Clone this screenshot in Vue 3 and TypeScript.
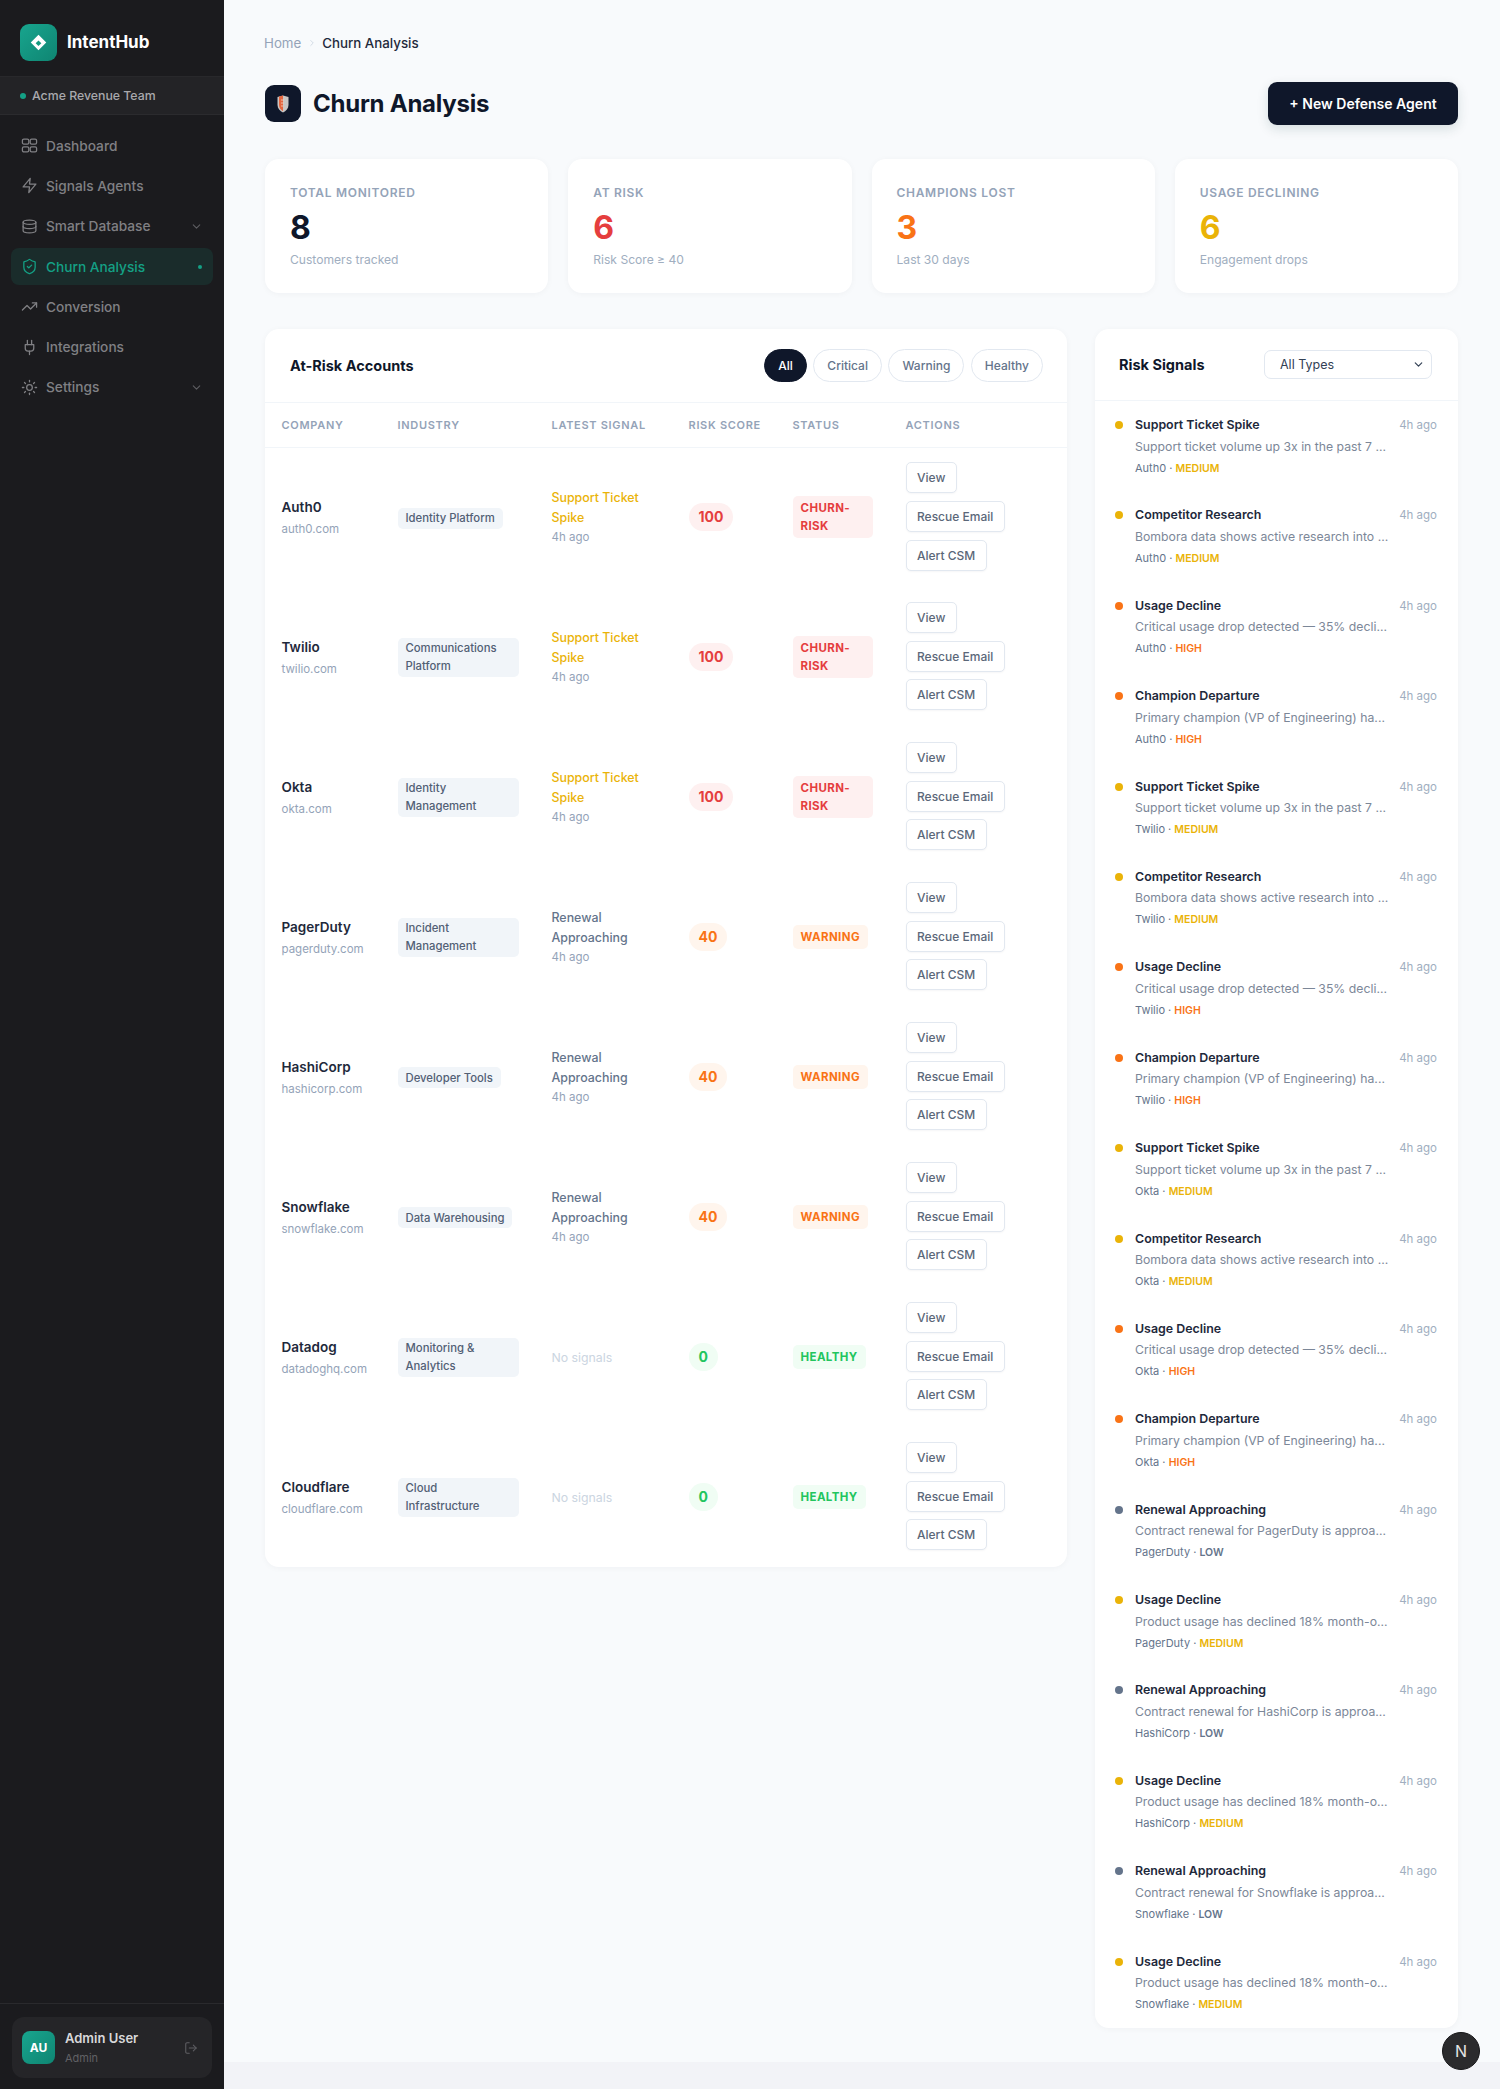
<template>
  <div class="app">
    <aside class="sidebar">
      <div class="brand">
        <div class="logo"><span class="logo-mark"></span></div>
        <span class="brand-name">IntentHub</span>
      </div>
      <div class="team"><span class="team-dot"></span>Acme Revenue Team</div>
      <nav class="nav">
        <a v-for="item in navItems" :key="item.label" class="nav-item" :class="{ active: item.active }">
          <svg class="nav-icon" viewBox="0 0 24 24" fill="none" stroke="currentColor" stroke-width="1.8" stroke-linecap="round" stroke-linejoin="round">
            <path v-for="(d, i) in item.paths" :key="i" :d="d" />
          </svg>
          <span class="nav-label">{{ item.label }}</span>
          <svg v-if="item.caret" class="caret" viewBox="0 0 24 24" fill="none" stroke="currentColor" stroke-width="2" stroke-linecap="round" stroke-linejoin="round"><path d="m6 9 6 6 6-6" /></svg>
          <span v-if="item.active" class="nav-dot"></span>
        </a>
      </nav>
      <div class="user-wrap">
        <div class="user">
          <div class="avatar">AU</div>
          <div class="user-info">
            <div class="user-name">Admin User</div>
            <div class="user-role">Admin</div>
          </div>
          <svg class="logout" viewBox="0 0 24 24" fill="none" stroke="currentColor" stroke-width="1.8" stroke-linecap="round" stroke-linejoin="round">
            <path d="M9 21H5a2 2 0 0 1-2-2V5a2 2 0 0 1 2-2h4" /><path d="m16 17 5-5-5-5" /><path d="M21 12H9" />
          </svg>
        </div>
      </div>
    </aside>

    <main class="main">
      <div class="crumbs">
        <span class="crumb-home">Home</span>
        <svg class="crumb-sep" viewBox="0 0 24 24" fill="none" stroke="currentColor" stroke-width="2" stroke-linecap="round" stroke-linejoin="round"><path d="m9 18 6-6-6-6" /></svg>
        <span class="crumb-current">Churn Analysis</span>
      </div>

      <header class="page-head">
        <div class="page-title">
          <div class="title-icon">
            <svg viewBox="0 0 12 18" width="12" height="18">
              <path d="M6 .5 11.500 2v8c0 3.500-2.500 6-5.500 7.500C3 16 .5 13.500.5 10V2z" fill="#c9c6c4" />
              <path d="M6 .5 2 1.600v8.400c0 2.800 1.800 4.900 4 6.300z" fill="#e4663f" />
              <path d="M4 5h3M4 8h3M4 11h2.500" stroke="#f3d3c3" stroke-width=".8" />
            </svg>
          </div>
          <h1>Churn Analysis</h1>
        </div>
        <button class="primary">+ New Defense Agent</button>
      </header>

      <section class="stats">
        <div v-for="s in stats" :key="s.label" class="stat">
          <div class="stat-label">{{ s.label }}</div>
          <div class="stat-value" :class="s.tone">{{ s.value }}</div>
          <div class="stat-sub">{{ s.sub }}</div>
        </div>
      </section>

      <section class="columns">
        <div class="card accounts">
          <div class="accounts-head">
            <h2>At-Risk Accounts</h2>
            <div class="filters">
              <button v-for="(f, i) in filters" :key="f" class="filter" :class="{ on: i === 0 }">{{ f }}</button>
            </div>
          </div>
          <table>
            <colgroup>
              <col class="c1" /><col class="c2" /><col class="c3" /><col class="c4" /><col class="c5" /><col class="c6" />
            </colgroup>
            <thead>
              <tr>
                <th>Company</th><th>Industry</th><th>Latest Signal</th><th>Risk Score</th><th>Status</th><th>Actions</th>
              </tr>
            </thead>
            <tbody>
              <tr v-for="a in accounts" :key="a.name">
                <td>
                  <div class="co-name">{{ a.name }}</div>
                  <div class="co-domain">{{ a.domain }}</div>
                </td>
                <td><span class="tag">{{ a.industry }}</span></td>
                <td>
                  <template v-if="a.signal">
                    <div class="sig" :class="a.level">{{ a.signal }}</div>
                    <div class="sig-time">4h ago</div>
                  </template>
                  <div v-else class="no-sig">No signals</div>
                </td>
                <td><span class="score" :class="a.level">{{ a.score }}</span></td>
                <td><span class="status" :class="a.level">{{ a.status }}</span></td>
                <td>
                  <div class="actions">
                    <button>View</button>
                    <button>Rescue Email</button>
                    <button>Alert CSM</button>
                  </div>
                </td>
              </tr>
            </tbody>
          </table>
        </div>

        <div class="card signals">
          <div class="signals-head">
            <h2>Risk Signals</h2>
            <div class="select">
              All Types
              <svg viewBox="0 0 24 24" fill="none" stroke="currentColor" stroke-width="2.2" stroke-linecap="round" stroke-linejoin="round"><path d="m6 9 6 6 6-6" /></svg>
            </div>
          </div>
          <div v-for="(s, i) in signals" :key="i" class="signal">
            <span class="dot" :class="s.sev"></span>
            <div class="signal-body">
              <div class="signal-top">
                <span class="signal-title">{{ s.title }}</span>
                <span class="signal-time">4h ago</span>
              </div>
              <div class="signal-desc">{{ s.desc }}</div>
              <div class="signal-meta">{{ s.company }} · <span class="sev" :class="s.sev">{{ s.sev.toUpperCase() }}</span></div>
            </div>
          </div>
        </div>
      </section>
    </main>

    <div class="dev-badge">N</div>
  </div>
</template>

<script setup lang="ts">
interface NavItem {
  label: string
  paths: string[]
  caret?: boolean
  active?: boolean
}

const navItems: NavItem[] = [
  { label: 'Dashboard', paths: ['M4 3h5a2 2 0 0 1 2 2v3a2 2 0 0 1-2 2H4a2 2 0 0 1-2-2V5a2 2 0 0 1 2-2z', 'M15 3h5a2 2 0 0 1 2 2v3a2 2 0 0 1-2 2h-5a2 2 0 0 1-2-2V5a2 2 0 0 1 2-2z', 'M4 14h5a2 2 0 0 1 2 2v3a2 2 0 0 1-2 2H4a2 2 0 0 1-2-2v-3a2 2 0 0 1 2-2z', 'M15 14h5a2 2 0 0 1 2 2v3a2 2 0 0 1-2 2h-5a2 2 0 0 1-2-2v-3a2 2 0 0 1 2-2z'] },
  { label: 'Signals Agents', paths: ['M13 2 3 14h9l-1 8 10-12h-9l1-8z'] },
  { label: 'Smart Database', caret: true, paths: ['M3 6c0-1.700 4-3 9-3s9 1.300 9 3-4 3-9 3-9-1.300-9-3z', 'M3 6v12c0 1.700 4 3 9 3s9-1.300 9-3V6', 'M3 12c0 1.700 4 3 9 3s9-1.300 9-3'] },
  { label: 'Churn Analysis', active: true, paths: ['M20 13c0 5-3.500 7.500-7.660 8.950a1 1 0 0 1-.67-.01C7.500 20.500 4 18 4 13V6a1 1 0 0 1 1-1c2 0 4.500-1.200 6.240-2.720a1.170 1.170 0 0 1 1.520 0C14.510 3.810 17 5 19 5a1 1 0 0 1 1 1z', 'm9 12 2 2 4-4'] },
  { label: 'Conversion', paths: ['M22 7l-8.500 8.500-5-5L2 17', 'M16 7h6v6'] },
  { label: 'Integrations', paths: ['M12 22v-5', 'M9 8V2', 'M15 8V2', 'M18 8v5a4 4 0 0 1-4 4h-4a4 4 0 0 1-4-4V8z'] },
  { label: 'Settings', caret: true, paths: ['M12 8a4 4 0 1 0 0 8 4 4 0 0 0 0-8z', 'M12 2v2', 'M12 20v2', 'M4.900 4.900l1.400 1.400', 'M17.700 17.700l1.400 1.400', 'M2 12h2', 'M20 12h2', 'M6.300 17.700l-1.400 1.400', 'M19.100 4.900l-1.400 1.400'] }
]

const stats = [
  { label: 'Total Monitored', value: 8, sub: 'Customers tracked', tone: 'ink' },
  { label: 'At Risk', value: 6, sub: 'Risk Score ≥ 40', tone: 'red' },
  { label: 'Champions Lost', value: 3, sub: 'Last 30 days', tone: 'orange' },
  { label: 'Usage Declining', value: 6, sub: 'Engagement drops', tone: 'amber' }
]

const filters = ['All', 'Critical', 'Warning', 'Healthy']

type Level = 'churn' | 'warn' | 'ok'

const row = (name: string, domain: string, industry: string, level: Level) => ({
  name,
  domain,
  industry,
  level,
  signal: level === 'churn' ? 'Support Ticket Spike' : level === 'warn' ? 'Renewal Approaching' : '',
  score: level === 'churn' ? 100 : level === 'warn' ? 40 : 0,
  status: level === 'churn' ? 'CHURN-RISK' : level === 'warn' ? 'WARNING' : 'HEALTHY'
})

const accounts = [
  row('Auth0', 'auth0.com', 'Identity Platform', 'churn'),
  row('Twilio', 'twilio.com', 'Communications Platform', 'churn'),
  row('Okta', 'okta.com', 'Identity Management', 'churn'),
  row('PagerDuty', 'pagerduty.com', 'Incident Management', 'warn'),
  row('HashiCorp', 'hashicorp.com', 'Developer Tools', 'warn'),
  row('Snowflake', 'snowflake.com', 'Data Warehousing', 'warn'),
  row('Datadog', 'datadoghq.com', 'Monitoring & Analytics', 'ok'),
  row('Cloudflare', 'cloudflare.com', 'Cloud Infrastructure', 'ok')
]

const critical = (company: string) => [
  { title: 'Support Ticket Spike', desc: 'Support ticket volume up 3x in the past 7 ...', company, sev: 'medium' },
  { title: 'Competitor Research', desc: 'Bombora data shows active research into ...', company, sev: 'medium' },
  { title: 'Usage Decline', desc: 'Critical usage drop detected — 35% decli...', company, sev: 'high' },
  { title: 'Champion Departure', desc: 'Primary champion (VP of Engineering) ha...', company, sev: 'high' }
]

const renewal = (company: string) => [
  { title: 'Renewal Approaching', desc: `Contract renewal for ${company} is approa...`, company, sev: 'low' },
  { title: 'Usage Decline', desc: 'Product usage has declined 18% month-o...', company, sev: 'medium' }
]

const signals = [
  ...critical('Auth0'),
  ...critical('Twilio'),
  ...critical('Okta'),
  ...renewal('PagerDuty'),
  ...renewal('HashiCorp'),
  ...renewal('Snowflake')
]
</script>

<style>
html, body { margin: 0; background: #f2f3f7; }
</style>

<style scoped>
.app {
  display: flex;
  align-items: flex-start;
  min-height: 100vh;
  font-family: Inter, "Liberation Sans", sans-serif;
  color: #0f172a;
}

/* sidebar */
.sidebar {
  width: 224px;
  flex: none;
  height: 100vh;
  background: #1b1b1e;
  display: flex;
  flex-direction: column;
}
.brand {
  height: 76px;
  box-sizing: border-box;
  padding: 24px 20px 0;
  display: flex;
  align-items: flex-start;
  gap: 10px;
}
.logo {
  width: 37px;
  height: 37px;
  border-radius: 9px;
  background: linear-gradient(135deg, #18a58e, #0f8572);
  display: flex;
  align-items: center;
  justify-content: center;
}
.logo-mark {
  width: 11px;
  height: 11px;
  background: #fff;
  transform: rotate(45deg);
  position: relative;
}
.logo-mark::after {
  content: "";
  position: absolute;
  inset: 3.500px;
  background: #14997f;
}
.brand-name {
  font-size: 17px;
  font-weight: 700;
  color: #fff;
  line-height: 37px;
}
.team {
  height: 39px;
  box-sizing: border-box;
  padding-left: 20px;
  display: flex;
  align-items: center;
  gap: 6px;
  background: #232326;
  border-top: 1px solid #28282b;
  border-bottom: 1px solid #2b2b2e;
  font-size: 12.300px;
  font-weight: 500;
  color: #a9a9ad;
}
.team-dot {
  width: 6px;
  height: 6px;
  border-radius: 50%;
  background: #14a085;
}
.nav {
  padding: 12px 11px 0;
  display: flex;
  flex-direction: column;
  gap: 3px;
}
.nav-item {
  height: 37.300px;
  border-radius: 8px;
  padding: 0 10px 0 10px;
  display: flex;
  align-items: center;
  gap: 8px;
  font-size: 13.700px;
  font-weight: 500;
  color: #808084;
}
.nav-item.active {
  background: rgba(20, 160, 133, 0.13);
  color: #14a085;
}
.nav-icon {
  width: 17px;
  height: 17px;
  flex: none;
}
.nav-label {
  flex: 1;
}
.caret {
  width: 13px;
  height: 13px;
  color: #5d5d61;
}
.nav-dot {
  width: 4px;
  height: 4px;
  border-radius: 50%;
  background: #14a085;
  margin-right: 1px;
}
.user-wrap {
  margin-top: auto;
  border-top: 1px solid #2a2a2d;
  height: 86px;
  box-sizing: border-box;
  padding: 13px 12px 0;
}
.user {
  height: 61px;
  box-sizing: border-box;
  border-radius: 12px;
  background: #252528;
  padding: 0 14px 0 10px;
  display: flex;
  align-items: center;
  gap: 10px;
}
.avatar {
  width: 33px;
  height: 33px;
  border-radius: 8px;
  background: linear-gradient(135deg, #18a58e, #0f8572);
  color: #fff;
  font-size: 12px;
  font-weight: 700;
  display: flex;
  align-items: center;
  justify-content: center;
}
.user-info {
  flex: 1;
}
.user-name {
  font-size: 13px;
  font-weight: 600;
  color: #d8d8da;
  line-height: 18px;
}
.user-role {
  font-size: 11px;
  color: #616165;
  line-height: 16px;
  margin-top: 3px;
}
.logout {
  width: 14px;
  height: 14px;
  color: #5f5f63;
}

/* main */
.main {
  flex: 1;
  min-width: 0;
  background: #f8fafc;
  padding: 33px 42px 34px 41px;
}
.crumbs {
  height: 20px;
  display: flex;
  align-items: center;
  font-size: 13.300px;
  margin-left: -1px;
}
.crumb-home {
  color: #94a3b8;
}
.crumb-sep {
  width: 10px;
  height: 10px;
  margin: 0 5.500px;
  color: #cbd5e1;
}
.crumb-current {
  color: #1e293b;
  font-weight: 500;
}
.page-head {
  margin-top: 29px;
  height: 43px;
  display: flex;
  align-items: center;
  justify-content: space-between;
}
.page-title {
  display: flex;
  align-items: center;
  gap: 12px;
}
.title-icon {
  width: 36px;
  height: 37px;
  border-radius: 9px;
  background: #0f172a;
  display: flex;
  align-items: center;
  justify-content: center;
}
h1 {
  margin: 0;
  font-size: 24px;
  font-weight: 700;
  letter-spacing: -0.25px;
  color: #0f172a;
}
.primary {
  height: 43px;
  width: 190px;
  border: 0;
  border-radius: 9px;
  background: #0f172a;
  color: #fff;
  font: 600 14px Inter, sans-serif;
  box-shadow: 0 4px 12px rgba(15, 60, 60, 0.14);
}
.stats {
  margin-top: 34px;
  display: grid;
  grid-template-columns: repeat(4, 1fr);
  gap: 20px;
}
.stat {
  height: 134px;
  box-sizing: border-box;
  background: #fff;
  border-radius: 14px;
  box-shadow: 0 1px 6px rgba(15, 23, 42, 0.04);
  padding: 26px 25px 0;
}
.stat-label {
  font-size: 12px;
  font-weight: 600;
  line-height: 16px;
  letter-spacing: 0.7px;
  text-transform: uppercase;
  color: #94a3b8;
}
.stat-value {
  margin-top: 8px;
  font-size: 32px;
  font-weight: 700;
  line-height: 38px;
}
.stat-value.ink { color: #0f172a; }
.stat-value.red { color: #e53e3e; }
.stat-value.orange { color: #f97316; }
.stat-value.amber { color: #eab308; }
.stat-sub {
  margin-top: 5px;
  font-size: 12.100px;
  line-height: 16px;
  color: #a0aec0;
}
.columns {
  margin-top: 36px;
  display: grid;
  grid-template-columns: 1fr 363px;
  gap: 28px;
  align-items: start;
}
.card {
  background: #fff;
  border-radius: 14px;
  box-shadow: 0 1px 6px rgba(15, 23, 42, 0.04);
}
h2 {
  margin: 0;
  font-size: 14.500px;
  font-weight: 700;
  color: #0f172a;
}
.accounts-head {
  height: 74px;
  box-sizing: border-box;
  padding: 0 24px 0 25px;
  display: flex;
  align-items: center;
  justify-content: space-between;
  border-bottom: 1px solid #f1f5f9;
}
.filters {
  display: flex;
  gap: 6.500px;
}
.filter {
  height: 33px;
  padding: 0 13px;
  border: 1px solid #e2e8f0;
  border-radius: 17px;
  background: #fff;
  color: #64748b;
  font: 500 12px Inter, sans-serif;
}
.filter.on {
  background: #0f172a;
  border-color: #0f172a;
  color: #fff;
}
table {
  width: 100%;
  border-collapse: collapse;
  table-layout: fixed;
}
.c1 { width: 116px; }
.c2 { width: 154px; }
.c3 { width: 137px; }
.c4 { width: 104px; }
.c5 { width: 113px; }
th {
  height: 44px;
  box-sizing: border-box;
  padding: 1px 0 0 16.500px;
  text-align: left;
  font-size: 11px;
  font-weight: 600;
  letter-spacing: 0.7px;
  text-transform: uppercase;
  color: #94a3b8;
  border-bottom: 1px solid #f1f5f9;
}
td {
  height: 140px;
  box-sizing: border-box;
  padding: 0 16px 0 16.500px;
  vertical-align: middle;
}
.co-name {
  font-size: 13.500px;
  font-weight: 600;
  line-height: 20px;
  color: #1e293b;
}
.co-domain {
  margin-top: 3px;
  font-size: 11.500px;
  line-height: 18px;
  color: #94a3b8;
}
.tag {
  display: inline-block;
  padding: 1.500px 8px;
  border-radius: 5px;
  background: #f1f5f9;
  color: #526075;
  font-size: 11.300px;
  font-weight: 500;
  line-height: 18px;
}
.sig {
  font-size: 12.400px;
  font-weight: 500;
  line-height: 20px;
}
.sig.churn { color: #eab308; }
.sig.warn { color: #64748b; }
.sig-time {
  margin-top: -1px;
  font-size: 11.500px;
  line-height: 20px;
  color: #94a3b8;
}
.no-sig {
  font-size: 12.300px;
  color: #cbd5e1;
}
.score {
  display: inline-block;
  height: 28px;
  padding: 0 10px;
  border-radius: 14px;
  font-size: 14px;
  font-weight: 700;
  line-height: 28px;
}
.score.churn { background: #fef0f0; color: #e53e3e; }
.score.warn { background: #fff5ed; color: #f97316; }
.score.ok { background: #f0fdf4; color: #22c55e; }
.status {
  display: inline-block;
  padding: 3px 8px;
  border-radius: 5px;
  font-size: 11.500px;
  font-weight: 700;
  line-height: 18px;
  letter-spacing: 0.4px;
}
.status.churn { background: #fef0f0; color: #e53e3e; }
.status.warn { background: #fff5ed; color: #f97316; }
.status.ok { background: #f0fdf4; color: #22c55e; }
.actions {
  display: flex;
  flex-direction: column;
  align-items: flex-start;
  gap: 7.700px;
  margin-top: -1.500px;
}
.actions button {
  height: 31px;
  padding: 0 10.500px;
  border: 1px solid #e2e8f0;
  border-radius: 5px;
  background: #fff;
  color: #5b6779;
  font: 500 12px Inter, sans-serif;
  box-shadow: 0 1px 2px rgba(15, 23, 42, 0.04);
}
.signals-head {
  height: 72px;
  box-sizing: border-box;
  padding: 0 26px 0 24px;
  display: flex;
  align-items: center;
  justify-content: space-between;
  border-bottom: 1px solid #f1f5f9;
}
.select {
  width: 168px;
  height: 29px;
  box-sizing: border-box;
  padding: 0 6px 0 15px;
  border: 1px solid #e2e8f0;
  border-radius: 7px;
  display: flex;
  align-items: center;
  justify-content: space-between;
  font-size: 12.500px;
  color: #334155;
}
.select svg {
  width: 13px;
  height: 13px;
  color: #334155;
}
.signal {
  box-sizing: border-box;
  height: 90.400px;
  padding: 15px 21px 0 20px;
  display: flex;
  gap: 12px;
}
.dot {
  width: 8px;
  height: 8px;
  flex: none;
  margin-top: 5px;
  border-radius: 50%;
}
.dot.medium { background: #eab308; }
.dot.high { background: #f97316; }
.dot.low { background: #64748b; }
.signal-body {
  flex: 1;
  min-width: 0;
}
.signal-top {
  display: flex;
  justify-content: space-between;
  line-height: 18px;
}
.signal-title {
  font-size: 12.400px;
  font-weight: 600;
  color: #1e293b;
}
.signal-time {
  font-size: 11.500px;
  color: #a0aec0;
}
.signal-desc {
  margin-top: 3.500px;
  font-size: 12.250px;
  line-height: 18px;
  color: #7c8798;
  white-space: nowrap;
}
.signal-meta {
  margin-top: 3px;
  font-size: 11px;
  line-height: 18px;
  color: #64748b;
}
.sev {
  font-size: 10.500px;
  font-weight: 600;
}
.sev.medium { color: #eab308; }
.sev.high { color: #f97316; }
.sev.low { color: #64748b; }
.dev-badge {
  position: fixed;
  left: 1442px;
  top: 2032px;
  width: 38px;
  height: 38px;
  border-radius: 50%;
  background: #2b2b2d;
  border: 1px solid #161618;
  box-sizing: border-box;
  color: #e5e5e5;
  font-size: 16px;
  font-weight: 400;
  display: flex;
  align-items: center;
  justify-content: center;
}
</style>
